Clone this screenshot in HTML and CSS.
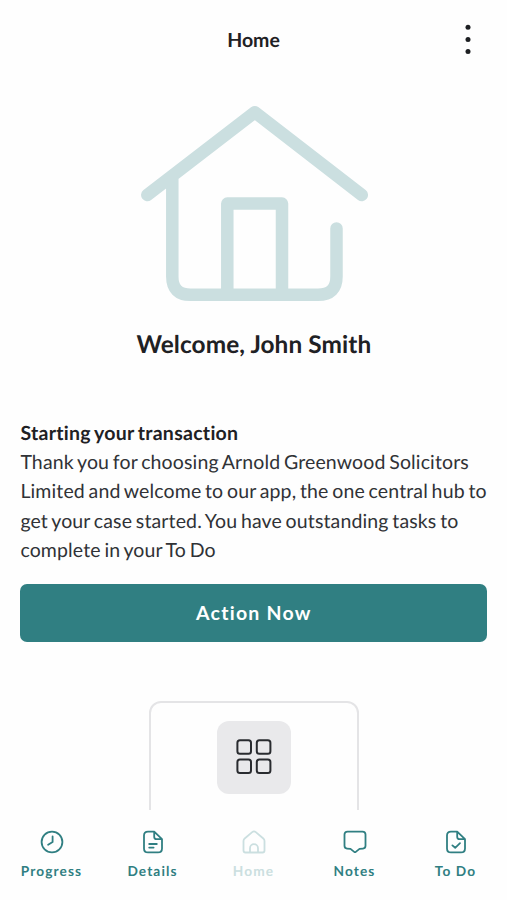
FILE: index.html
```html
<!DOCTYPE html>
<html lang="en">
<head>
<meta charset="utf-8">
<title>Home</title>
<link rel="stylesheet" href="styles.css">
</head>
<body>
<div class="app">
  <header class="top-bar">
    <h1 class="title">Home</h1>
    <svg class="more" viewBox="0 0 8 32" fill="#1d1f22"><circle cx="4" cy="4.3" r="2.5"/><circle cx="4" cy="16.4" r="2.5"/><circle cx="4" cy="28.5" r="2.5"/></svg>
  </header>
  <main class="content">
    <svg class="hero" viewBox="140 105 230 198" fill="none" stroke="#cbdfe0" stroke-width="12.5" stroke-linecap="round" stroke-linejoin="round">
      <path d="M147.3 195 254.8 112.3 361.8 195M172.3 178V276.5Q172.3 294.8 190.5 294.8H318Q336.5 294.8 336.5 276.5V228.5M227.3 294.8V203.6H282V294.8"/>
    </svg>
    <h2 class="welcome">Welcome, John Smith</h2>
    <section class="message">
      <h3 class="subject">Starting your transaction</h3>
      <p class="copy">Thank you for choosing Arnold Greenwood Solicitors<br>Limited and welcome to our app, the one central hub to<br>get your case started. You have outstanding tasks to<br>complete in your To Do</p>
    </section>
    <button class="action">Action Now</button>
    <div class="card">
      <div class="tile">
        <svg width="36" height="36" viewBox="0 0 36 36" fill="none" stroke="#292b2f" stroke-width="2"><rect x="1.4" y="1.2" width="13.6" height="13.6" rx="2.5"/><rect x="20.8" y="1.2" width="13.6" height="13.6" rx="2.5"/><rect x="1.4" y="20.4" width="13.6" height="13.6" rx="2.5"/><rect x="20.8" y="20.4" width="13.6" height="13.6" rx="2.5"/></svg>
      </div>
    </div>
  </main>
  <nav class="tabs">
    <a class="tab"><svg class="icon" viewBox="0 0 24 24"><circle cx="12" cy="12" r="10.4"/><path d="M12.6 6.5V12L8.1 14.7"/></svg><span>Progress</span></a>
    <a class="tab"><svg class="icon" viewBox="0 0 24 24"><path d="M13.2 1.6H7Q3 1.6 3 5.6V18.4Q3 22.4 7 22.4H17Q21 22.4 21 18.4V9.2L13.2 1.6V6.7Q13.2 9.2 15.7 9.2H21M8.2 14H15.8M8.2 17.6H12.6"/></svg><span>Details</span></a>
    <a class="tab tab-active"><svg class="icon" viewBox="0 0 24 24"><path d="M1.5 11Q1.5 9.5 2.7 8.5L10.2 2.1Q12 .7 13.8 2.1L21.3 8.5Q22.5 9.5 22.5 11V20.5Q22.5 22.5 20.5 22.5H3.5Q1.5 22.5 1.5 20.5ZM8 22.5V18.2A4 4 0 0 1 16 18.2V22.5"/></svg><span>Home</span></a>
    <a class="tab"><svg class="icon" viewBox="0 0 24 24"><path d="M4.5 1.6H19.5Q22.5 1.6 22.5 4.6V15.8Q22.5 18.4 20 18.6L16.5 18.9 12.8 21.9Q12 22.5 11.2 21.9L7.5 18.9 4 18.6Q1.5 18.4 1.5 15.8V4.6Q1.5 1.6 4.5 1.6Z"/></svg><span>Notes</span></a>
    <a class="tab"><svg class="icon" viewBox="0 0 24 24"><path d="M13.2 1.6H7Q3 1.6 3 5.6V18.4Q3 22.4 7 22.4H17Q21 22.4 21 18.4V9.2L13.2 1.6V6.7Q13.2 9.2 15.7 9.2H21M8.4 15.4 11.2 17.8 16 13.2"/></svg><span>To Do</span></a>
  </nav>
</div>
</body>
</html>
```
FILE: styles.css
```css
* { box-sizing: border-box; }
body { margin: 0; background: #fefefe; color: #1f2124; font-family: Lato, "Liberation Sans", sans-serif; font-variant-ligatures: none; text-rendering: geometricPrecision; }
h1, h2, h3, p { margin: 0; }
.app { display: flex; flex-direction: column; height: 900px; overflow: hidden; }
.top-bar { display: grid; grid-template-columns: 1fr auto 1fr; align-items: center; height: 80px; padding: 0 35px; }
.title { grid-column: 2; padding-top: 2px; font-size: 19.5px; line-height: 24px; font-weight: 700; }
.more { width: 8px; height: 32px; justify-self: end; margin-top: -2px; }
.content { flex: 0 0 730px; display: flex; flex-direction: column; align-items: center; padding: 25px 19.6px 0 20.4px; overflow: hidden; }
.hero { width: 230px; height: 198px; flex: none; margin-left: 2px; }
.welcome { margin-top: 27px; font-size: 24.4px; line-height: 30px; font-weight: 700; letter-spacing: .08px; white-space: nowrap; }
.message { align-self: stretch; margin-top: 58.7px; font-size: 19.5px; line-height: 29.3px; white-space: nowrap; }
.subject { font-size: inherit; font-weight: 700; letter-spacing: .28px; word-spacing: -1.4px; }
.copy { color: #303236; letter-spacing: .13px; word-spacing: -1.4px; }
.action { align-self: stretch; flex: none; height: 58.5px; margin-top: 18.8px; border: 0; border-radius: 7px; background: #307f82; color: #fff; font: 700 19.5px/24px Lato, "Liberation Sans", sans-serif; letter-spacing: 1.25px; }
.card { flex: none; display: flex; justify-content: center; width: 210px; height: 180px; margin-top: 58.5px; padding-top: 18px; border: 2px solid #e4e4e6; border-radius: 12px; }
.tile { display: flex; align-items: center; justify-content: center; width: 74px; height: 73px; border-radius: 12px; background: #e9e9eb; }
.tabs { display: grid; grid-template-columns: repeat(5, 101px); justify-content: center; height: 90px; padding-top: 20px; }
.tab { display: flex; flex-direction: column; align-items: center; gap: 9px; color: #307f82; font-size: 13.7px; line-height: 16px; font-weight: 700; letter-spacing: 1.1px; }
.tab-active { color: #cbdfe0; }
.icon { width: 24px; height: 24px; fill: none; stroke: currentColor; stroke-width: 1.8; stroke-linecap: round; stroke-linejoin: round; }
```
